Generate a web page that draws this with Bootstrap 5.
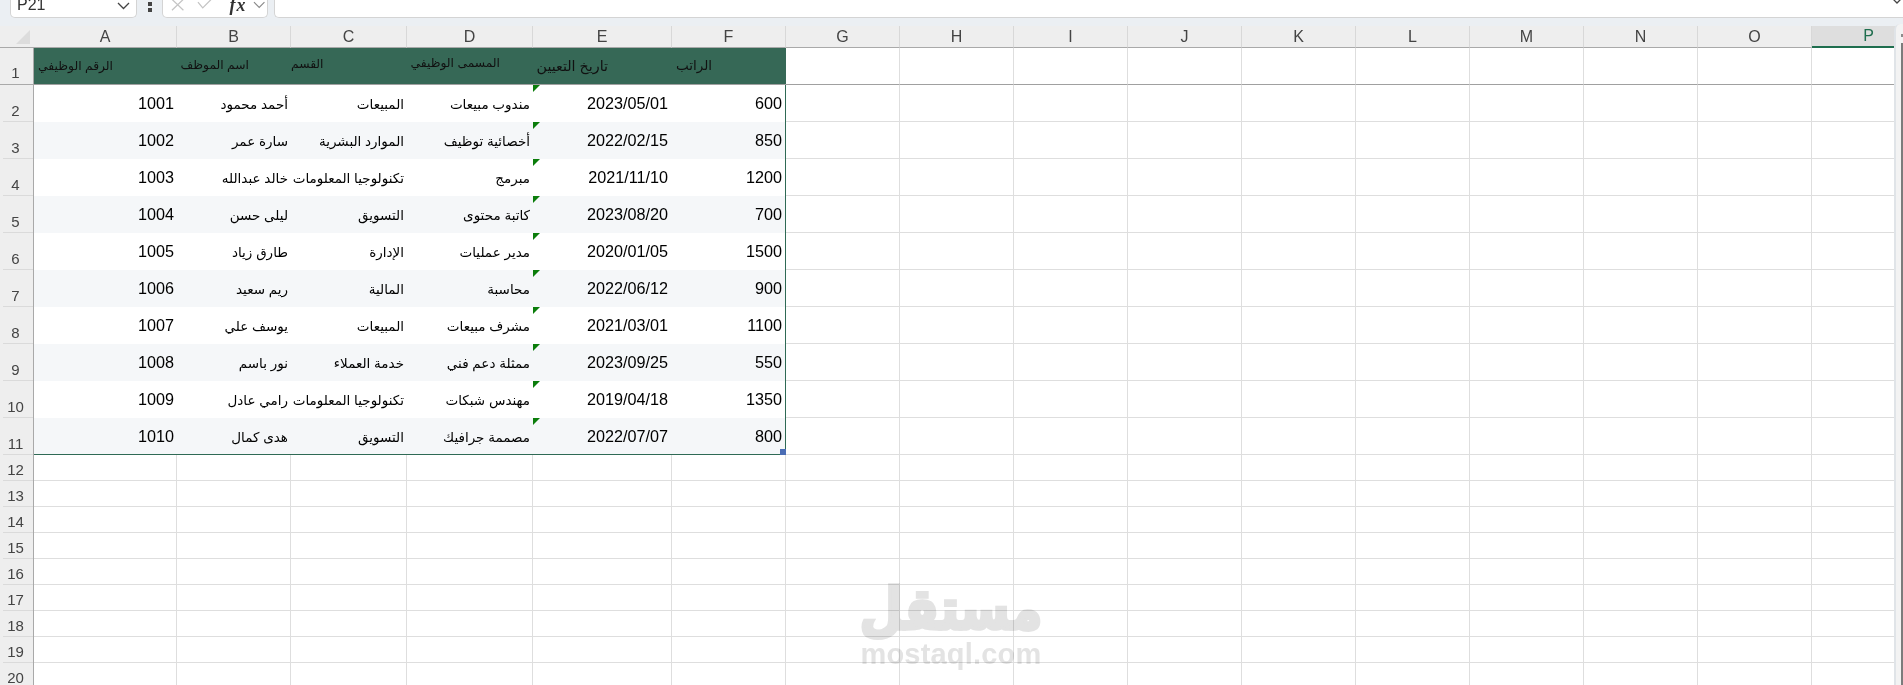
<!DOCTYPE html>
<html lang="ar">
<head>
<meta charset="utf-8">
<title>Sheet</title>
<link rel="stylesheet" href="https://cdn.jsdelivr.net/npm/bootstrap@5.3.0/dist/css/bootstrap.min.css">
<style>
html,body{margin:0;height:685px;overflow:hidden;background:#fff}
body{font-family:"Liberation Sans",Arial,"DejaVu Sans",sans-serif;color:#000}
.fbar{height:26px;background:#ebeff3}
.fbox{height:18px;background:#fff;border:1px solid #d4d4d4;border-top:0;border-radius:0 0 5px 5px;box-sizing:border-box}
.fname{width:127px;margin-left:10px;padding:0 6px 0 6px;font-size:16px;line-height:10px;color:#333;overflow:hidden}
.fname span{margin-top:-8px}
.fname svg{margin-top:-6px}
.fdots{width:25px;padding-top:2px;gap:2px}
.fdot{width:4px;height:4px;background:#444}
.ffx{width:106px;padding:0 2px 0 8px;gap:0}
.ffx svg{margin-top:-7px}
.ic-x{margin-right:12px}
.ic-c{margin-right:17px}
.fx-label{font-family:"Liberation Serif",serif;font-style:italic;font-weight:700;font-size:18px;line-height:12px;color:#333;margin-top:-8px;margin-right:6px;letter-spacing:1px}
.finput{flex:1;margin-left:6px;border-radius:0 0 0 5px;border-right:0;overflow:hidden}
.finput svg{margin:-2px 0 0 0}
.sheet{table-layout:fixed;border-collapse:separate;border-spacing:0;width:1926px;font-size:16.2px}
.sheet th,.sheet td{padding:0;box-sizing:border-box;white-space:nowrap;font-weight:400;border-right:1px solid #dedede;border-bottom:1px solid #dedede;overflow:visible}
.sheet thead th{height:22px;background:#eee;text-align:center;color:#444;font-size:16px;border-right:1px solid #d8d8d8;border-bottom:1px solid #a9a9a9;line-height:21px}
.sheet .corner{position:relative;border-right:0}
.corner::after{content:"";position:absolute;right:4px;bottom:3px;border-left:14px solid transparent;border-bottom:14px solid #dcdcdc}
.sheet thead .sel{background:#dedede;border-bottom:2px solid #1f6e4e;color:#1f6e4e;line-height:20px}
.sheet tbody th{background:linear-gradient(#dadada,#dadada) right bottom/30px 1px no-repeat #eee;border-bottom:0;border-right:1px solid #a9a9a9;text-align:center;vertical-align:bottom;font-size:15px;color:#444;padding-right:2px;line-height:18px;padding-bottom:2px}
.sheet .tall{height:37px}
.sheet .low{height:26px}
.sheet td.num{text-align:right;padding-right:3px;vertical-align:middle}
.sheet td.num.note{padding-right:4px}
.ar{font-size:13.5px}
.sheet tr.headrow td{background:#366856;border-right:0;border-bottom:1px solid #a0a0a0;text-align:right;color:#111;vertical-align:middle;line-height:14px;padding-bottom:10px}
.sheet tr.headrow .ar{font-size:12.3px}
.sheet tr.headrow td.plainhead{background:#fff;border-right:1px solid #dedede}
.sheet tr.headrow th{border-bottom:1px solid #a9a9a9;background:#eee}
.sheet tr.headrow td.h1{padding-right:64px}
.sheet tr.headrow td.h2{padding-right:42px}
.sheet tr.headrow td.h3{padding-right:85px}
.sheet tr.headrow td.h4{padding-right:33px}
.sheet tr.headrow td.h5{padding-right:64px;padding-bottom:2px}
.sheet tr.headrow td.h6{padding-right:74px;padding-bottom:1px}
.sheet tr.headrow td.h5 .ar{font-size:14.3px}
.sheet tr.headrow td.h6 .ar{font-size:13.5px}
.sheet tr.stripe td.num{background:#f5f7f9;border-right:0;border-bottom:0}
.sheet tr.plain td.num{border-right:0;border-bottom:0}
.sheet td.note{position:relative}
.note::before{content:"";position:absolute;left:0;top:0;border-top:7px solid #0b7d0b;border-right:7px solid transparent}
.sheet tr.stripe td.edge,.sheet tr.plain td.edge{border-right:1px solid #2f6a55}
.sheet tr.last td.num{border-bottom:1px solid #2f6a55}
.sheet td.grip{position:relative}
.grip::after{content:"";position:absolute;right:-1px;bottom:-1px;width:6px;height:6px;background:#4a6db5}
.wmark{position:absolute;left:851px;top:579px;width:200px;text-align:center;color:#e3e3e3;mix-blend-mode:multiply;pointer-events:none}
.wm-ar{font-family:"DejaVu Sans",sans-serif;font-weight:700;font-size:50px;line-height:60px;-webkit-text-stroke:3px #e3e3e3;transform:scaleY(1.15)}
.wm-en{font-family:"Liberation Sans",sans-serif;font-weight:700;font-size:29px;line-height:30px;letter-spacing:.2px}
.vtrack{position:absolute;right:0;top:24px;width:9px;height:661px;background:#f3f3f3;border-left:2px solid #e0e4e8;border-top-left-radius:6px}
.vthumb{position:absolute;right:0;top:19px;width:2px;height:642px;background:#7c7c7c}
.vmark{position:absolute;right:0;top:10px;width:2px;height:3px;background:#8c8c8c}
</style>
</head>
<body>
<div class="fbar d-flex align-items-start">
  <div class="fbox fname d-flex justify-content-between align-items-center"><span>P21</span>
    <svg width="13" height="8" viewBox="0 0 13 8"><path d="M1 1l5.5 5.5L12 1" fill="none" stroke="#444" stroke-width="1.3"/></svg></div>
  <div class="fdots d-flex flex-column align-items-center"><span class="fdot"></span><span class="fdot"></span></div>
  <div class="fbox ffx d-flex align-items-center">
    <svg class="ic-x" width="15" height="12" viewBox="0 0 15 12"><path d="M1 0l12 11.500M13 0L1 11.500" fill="none" stroke="#c4c4c4" stroke-width="1.300"/></svg>
    <svg class="ic-c" width="16" height="12" viewBox="0 0 16 12"><path d="M1 3l5 6L15 0" fill="none" stroke="#c4c4c4" stroke-width="1.300"/></svg>
    <span class="fx-label">fx</span>
    <svg width="13" height="8" viewBox="0 0 13 8"><path d="M1 1l5.500 5.500L12 1" fill="none" stroke="#8a8a8a" stroke-width="1.200"/></svg>
  </div>
  <div class="fbox finput d-flex justify-content-end align-items-start">
    <svg width="12" height="7" viewBox="0 0 12 7"><path d="M1 0l5 5 5-5" fill="none" stroke="#444" stroke-width="1.300"/></svg>
  </div>
</div>
<table class="sheet">
<colgroup><col style="width:34px"><col style="width:143px"><col style="width:114px"><col style="width:116px"><col style="width:126px"><col style="width:139px"><col style="width:114px"><col style="width:114px"><col style="width:114px"><col style="width:114px"><col style="width:114px"><col style="width:114px"><col style="width:114px"><col style="width:114px"><col style="width:114px"><col style="width:114px"><col style="width:114px"></colgroup>
<thead><tr><th class="corner"></th><th>A</th><th>B</th><th>C</th><th>D</th><th>E</th><th>F</th><th>G</th><th>H</th><th>I</th><th>J</th><th>K</th><th>L</th><th>M</th><th>N</th><th>O</th><th class="sel">P</th></tr></thead>
<tbody>
<tr class="tall headrow"><th>1</th><td class="h1"><span class="ar">الرقم الوظيفي</span></td><td class="h2"><span class="ar">اسم الموظف</span></td><td class="h3"><span class="ar">القسم</span></td><td class="h4"><span class="ar">المسمى الوظيفي</span></td><td class="h5"><span class="ar">تاريخ التعيين</span></td><td class="h6"><span class="ar">الراتب</span></td><td class="plainhead"></td><td class="plainhead"></td><td class="plainhead"></td><td class="plainhead"></td><td class="plainhead"></td><td class="plainhead"></td><td class="plainhead"></td><td class="plainhead"></td><td class="plainhead"></td><td class="plainhead"></td></tr>
<tr class="tall plain"><th>2</th><td class="num">1001</td><td class="num"><span class="ar">أحمد محمود</span></td><td class="num"><span class="ar">المبيعات</span></td><td class="num"><span class="ar">مندوب مبيعات</span></td><td class="num note">2023/05/01</td><td class="num edge">600</td><td></td><td></td><td></td><td></td><td></td><td></td><td></td><td></td><td></td><td></td></tr>
<tr class="tall stripe"><th>3</th><td class="num">1002</td><td class="num"><span class="ar">سارة عمر</span></td><td class="num"><span class="ar">الموارد البشرية</span></td><td class="num"><span class="ar">أخصائية توظيف</span></td><td class="num note">2022/02/15</td><td class="num edge">850</td><td></td><td></td><td></td><td></td><td></td><td></td><td></td><td></td><td></td><td></td></tr>
<tr class="tall plain"><th>4</th><td class="num">1003</td><td class="num"><span class="ar">خالد عبدالله</span></td><td class="num"><span class="ar">تكنولوجيا المعلومات</span></td><td class="num"><span class="ar">مبرمج</span></td><td class="num note">2021/11/10</td><td class="num edge">1200</td><td></td><td></td><td></td><td></td><td></td><td></td><td></td><td></td><td></td><td></td></tr>
<tr class="tall stripe"><th>5</th><td class="num">1004</td><td class="num"><span class="ar">ليلى حسن</span></td><td class="num"><span class="ar">التسويق</span></td><td class="num"><span class="ar">كاتبة محتوى</span></td><td class="num note">2023/08/20</td><td class="num edge">700</td><td></td><td></td><td></td><td></td><td></td><td></td><td></td><td></td><td></td><td></td></tr>
<tr class="tall plain"><th>6</th><td class="num">1005</td><td class="num"><span class="ar">طارق زياد</span></td><td class="num"><span class="ar">الإدارة</span></td><td class="num"><span class="ar">مدير عمليات</span></td><td class="num note">2020/01/05</td><td class="num edge">1500</td><td></td><td></td><td></td><td></td><td></td><td></td><td></td><td></td><td></td><td></td></tr>
<tr class="tall stripe"><th>7</th><td class="num">1006</td><td class="num"><span class="ar">ريم سعيد</span></td><td class="num"><span class="ar">المالية</span></td><td class="num"><span class="ar">محاسبة</span></td><td class="num note">2022/06/12</td><td class="num edge">900</td><td></td><td></td><td></td><td></td><td></td><td></td><td></td><td></td><td></td><td></td></tr>
<tr class="tall plain"><th>8</th><td class="num">1007</td><td class="num"><span class="ar">يوسف علي</span></td><td class="num"><span class="ar">المبيعات</span></td><td class="num"><span class="ar">مشرف مبيعات</span></td><td class="num note">2021/03/01</td><td class="num edge">1100</td><td></td><td></td><td></td><td></td><td></td><td></td><td></td><td></td><td></td><td></td></tr>
<tr class="tall stripe"><th>9</th><td class="num">1008</td><td class="num"><span class="ar">نور باسم</span></td><td class="num"><span class="ar">خدمة العملاء</span></td><td class="num"><span class="ar">ممثلة دعم فني</span></td><td class="num note">2023/09/25</td><td class="num edge">550</td><td></td><td></td><td></td><td></td><td></td><td></td><td></td><td></td><td></td><td></td></tr>
<tr class="tall plain"><th>10</th><td class="num">1009</td><td class="num"><span class="ar">رامي عادل</span></td><td class="num"><span class="ar">تكنولوجيا المعلومات</span></td><td class="num"><span class="ar">مهندس شبكات</span></td><td class="num note">2019/04/18</td><td class="num edge">1350</td><td></td><td></td><td></td><td></td><td></td><td></td><td></td><td></td><td></td><td></td></tr>
<tr class="tall stripe last"><th>11</th><td class="num">1010</td><td class="num"><span class="ar">هدى كمال</span></td><td class="num"><span class="ar">التسويق</span></td><td class="num"><span class="ar">مصممة جرافيك</span></td><td class="num note">2022/07/07</td><td class="num edge grip">800</td><td></td><td></td><td></td><td></td><td></td><td></td><td></td><td></td><td></td><td></td></tr>
<tr class="low"><th>12</th><td></td><td></td><td></td><td></td><td></td><td></td><td></td><td></td><td></td><td></td><td></td><td></td><td></td><td></td><td></td><td></td></tr>
<tr class="low"><th>13</th><td></td><td></td><td></td><td></td><td></td><td></td><td></td><td></td><td></td><td></td><td></td><td></td><td></td><td></td><td></td><td></td></tr>
<tr class="low"><th>14</th><td></td><td></td><td></td><td></td><td></td><td></td><td></td><td></td><td></td><td></td><td></td><td></td><td></td><td></td><td></td><td></td></tr>
<tr class="low"><th>15</th><td></td><td></td><td></td><td></td><td></td><td></td><td></td><td></td><td></td><td></td><td></td><td></td><td></td><td></td><td></td><td></td></tr>
<tr class="low"><th>16</th><td></td><td></td><td></td><td></td><td></td><td></td><td></td><td></td><td></td><td></td><td></td><td></td><td></td><td></td><td></td><td></td></tr>
<tr class="low"><th>17</th><td></td><td></td><td></td><td></td><td></td><td></td><td></td><td></td><td></td><td></td><td></td><td></td><td></td><td></td><td></td><td></td></tr>
<tr class="low"><th>18</th><td></td><td></td><td></td><td></td><td></td><td></td><td></td><td></td><td></td><td></td><td></td><td></td><td></td><td></td><td></td><td></td></tr>
<tr class="low"><th>19</th><td></td><td></td><td></td><td></td><td></td><td></td><td></td><td></td><td></td><td></td><td></td><td></td><td></td><td></td><td></td><td></td></tr>
<tr class="low"><th>20</th><td></td><td></td><td></td><td></td><td></td><td></td><td></td><td></td><td></td><td></td><td></td><td></td><td></td><td></td><td></td><td></td></tr>
</tbody>
</table>
<div class="vtrack"><div class="vmark"></div><div class="vthumb"></div></div>
<div class="wmark"><div class="wm-ar">مستقل</div><div class="wm-en">mostaql.com</div></div>
<script src="https://cdn.jsdelivr.net/npm/bootstrap@5.3.0/dist/js/bootstrap.bundle.min.js"></script>
</body>
</html>
